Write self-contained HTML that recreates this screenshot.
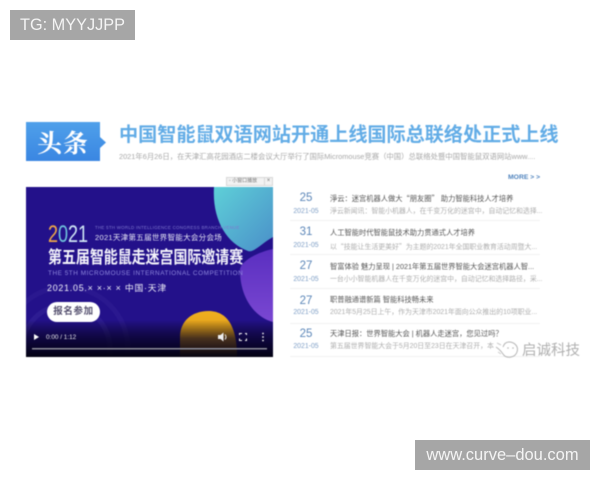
<!DOCTYPE html>
<html lang="zh">
<head>
<meta charset="utf-8">
<title>中国智能鼠双语网站</title>
<style>
html,body{margin:0;padding:0;background:#fff}
body{width:600px;height:480px;position:relative;overflow:hidden;font-family:"Liberation Sans","Noto Sans CJK SC",sans-serif}
.a{position:absolute;white-space:nowrap}
#c{position:absolute;left:0;top:0;width:600px;height:480px;filter:blur(.45px)}
.d{position:absolute;left:286px;width:40px;text-align:center;color:#5b86b8;line-height:1}
.n{font-size:11.5px}
.y{font-size:6.9px;color:#7f9fc6}
.t{position:absolute;left:330px;font-size:7.25px;color:#555;white-space:nowrap;line-height:1}
.s{position:absolute;left:330px;font-size:6.9px;color:#adadad;white-space:nowrap;line-height:1}
.l{position:absolute;left:290px;width:250px;height:1px;background:#f1f1f1}
.q{font-family:"Noto Sans CJK SC",sans-serif}
</style>
</head>
<body>
<div id="c">
  <svg class="a" style="left:26px;top:122px" width="82" height="40" viewBox="0 0 82 40">
    <defs><linearGradient id="g" x1="0" y1="0" x2="0" y2="1"><stop offset="0" stop-color="#4fa0ea"/><stop offset="1" stop-color="#3a86e2"/></linearGradient></defs>
    <path d="M0 0H74V15L80 20.5L74 26V39H0Z" fill="url(#g)"/>
  </svg>
  <div class="a" style="left:37px;top:126px;font:bold 25px/32px 'Noto Serif CJK SC',serif;color:#fff;letter-spacing:1px">头条</div>
  <div class="a" style="left:119px;top:123px;font-size:19.13px;font-weight:bold;line-height:26px;color:#62ace6">中国智能鼠双语网站开通上线国际总联络处正式上线</div>
  <div class="a" style="left:119px;top:152px;font-size:7.36px;line-height:10px;color:#a8a8a8">2021年6月26日，在天津汇高花园酒店二楼会议大厅举行了国际Micromouse竞赛（中国）总联络处暨中国智能鼠双语网站www....</div>

  <div class="a" style="left:508px;top:174px;font-size:6.8px;line-height:8px;font-weight:bold;color:#4f83bd">MORE &gt; &gt;</div>

  <div class="a" style="left:226px;top:177px;width:47px;height:9px;background:#f2f2f2;border:1px solid #d8d8d8;box-sizing:border-box;font-size:5px;line-height:7px;color:#777;padding-left:2px">▫ 小窗口播放</div>
  <div class="a" style="left:264px;top:177px;width:9px;height:9px;border:1px solid #d8d8d8;box-sizing:border-box;font-size:6px;line-height:7px;color:#777;text-align:center;background:#f2f2f2">×</div>

  <svg class="a" style="left:26px;top:187px" width="247" height="170" viewBox="0 0 247 170">
    <defs>
      <linearGradient id="b" x1="0" y1="0" x2="1" y2="1"><stop offset="0" stop-color="#5ed0d8"/><stop offset="1" stop-color="#4a8fc9"/></linearGradient>
      <linearGradient id="p" x1="0" y1="0" x2="0" y2="1"><stop offset="0" stop-color="#5a2fc0"/><stop offset="1" stop-color="#7a47d2"/></linearGradient>
      <linearGradient id="o" x1="0" y1="0" x2="0" y2="1"><stop offset="0" stop-color="#efb01f"/><stop offset="1" stop-color="#d98f1c"/></linearGradient>
      <linearGradient id="s" x1="0" y1="0" x2="0" y2="1"><stop offset="0" stop-color="#000" stop-opacity="0"/><stop offset=".5" stop-color="#05021e" stop-opacity=".7"/><stop offset="1" stop-color="#02010f" stop-opacity=".98"/></linearGradient>
    </defs>
    <rect width="247" height="170" fill="#23118a"/>
    <path d="M247 62V135C228 130 214 110 214 83C214 76 228 66 247 62Z" fill="url(#p)"/>
    <path d="M188 0H247V50C236 56 228 66 222 64C200 56 186 32 188 0Z" fill="url(#b)"/>
    <circle cx="40" cy="162" r="44" fill="none" stroke="#3a2a9c" stroke-width="5" opacity=".45"/>
    <circle cx="40" cy="162" r="62" fill="none" stroke="#3a2a9c" stroke-width="5" opacity=".3"/>
    <path d="M154 170V150C154 134 166 124 182.500 124C199 124 211 136 211 170Z" fill="url(#o)"/>
    <rect y="133" width="247" height="37" fill="url(#s)"/>
    <path d="M8 147V153L13 150Z" fill="#fff"/>
    <path d="M192 148H194.500L197.500 145.500V154.500L194.500 152H192Z" fill="#eee"/>
    <path d="M199 147.500Q201 150 199 152.500" fill="none" stroke="#eee" stroke-width="1"/>
    <path d="M213.500 148V146.500H216M219 146.500H220.500V148M220.500 151.500V153.500H219M216 153.500H213.500V151.500" fill="none" stroke="#eee" stroke-width="1"/>
    <circle cx="237" cy="146.500" r=".9" fill="#eee"/><circle cx="237" cy="150" r=".9" fill="#eee"/><circle cx="237" cy="153.500" r=".9" fill="#eee"/>
    <rect x="6" y="161" width="235" height="1.500" fill="#8f8f9c"/>
  </svg>

  <div class="a" style="left:48px;top:220px;font-size:24px;line-height:30px;color:#cfe6f5;transform:scaleX(.75);transform-origin:left"><span style="color:#efa948">2</span><span style="color:#6fc4dc">0</span><span>21</span></div>
  <div class="a" style="left:95px;top:225px;font-size:4.4px;line-height:6px;color:#7f78cf;letter-spacing:.28px">THE 5TH WORLD INTELLIGENCE CONGRESS BRANCH VENUE</div>
  <div class="a" style="left:95px;top:232px;font-size:7.5px;line-height:12px;color:#e6e6f5;letter-spacing:.3px">2021天津第五届世界智能大会分会场</div>
  <div class="a" style="left:48px;top:247px;font-size:17px;font-weight:bold;line-height:22px;color:#f4f4fb;transform:scaleX(.82);transform-origin:left">第五届智能鼠走迷宫国际邀请赛</div>
  <div class="a" style="left:48px;top:269px;font-size:6.4px;line-height:10px;color:#8d86dc;letter-spacing:.54px">THE 5TH MICROMOUSE INTERNATIONAL COMPETITION</div>
  <div class="a" style="left:47px;top:282px;font-size:8.8px;line-height:12px;color:#eeeef8;letter-spacing:.8px">2021.05.× ×·× × 中国·天津</div>
  <div class="a" style="left:47px;top:302px;width:53px;height:20px;border-radius:10px;background:#fff;color:#55506f;font-size:9.5px;font-weight:bold;line-height:20px;text-align:center;letter-spacing:.6px">报名参加</div>
  <div class="a" style="left:46px;top:332.500px;font-size:6.4px;line-height:9px;color:#e8e8ee">0:00 / 1:12</div>

  <div class="d n" style="top:193px">25</div><div class="d y" style="top:209px">2021-05</div>
  <div class="t" style="top:194.500px">淨云：迷宫机器人做大<span class="q">“</span>朋友圈<span class="q">”</span> 助力智能科技人才培养</div>
  <div class="s" style="top:208.500px">淨云新闻讯：智能小机器人，在千变万化的迷宫中，自动记忆和选择...</div>
  <div class="l" style="top:220px"></div>

  <div class="d n" style="top:227px">31</div><div class="d y" style="top:243px">2021-05</div>
  <div class="t" style="top:229px">人工智能时代智能鼠技术助力贯通式人才培养</div>
  <div class="s" style="top:242.500px">以<span class="q">“</span>技能让生活更美好<span class="q">”</span>为主题的2021年全国职业教育活动周暨大...</div>
  <div class="l" style="top:254px"></div>

  <div class="d n" style="top:261px">27</div><div class="d y" style="top:277px">2021-05</div>
  <div class="t" style="top:263px">智富体验 魅力呈现 | 2021年第五届世界智能大会迷宫机器人智...</div>
  <div class="s" style="top:276.500px">一台小小智能机器人在千变万化的迷宫中，自动记忆和选择路径，采...</div>
  <div class="l" style="top:288px"></div>

  <div class="d n" style="top:296px">27</div><div class="d y" style="top:310px">2021-05</div>
  <div class="t" style="top:296px">职普融通谱新篇 智能科技畅未来</div>
  <div class="s" style="top:309.500px">2021年5月25日上午，作为天津市2021年面向公众推出的10项职业...</div>
  <div class="l" style="top:323px"></div>

  <div class="d n" style="top:329px">25</div><div class="d y" style="top:344px">2021-05</div>
  <div class="t" style="top:330px">天津日报：世界智能大会 | 机器人走迷宫，您见过吗？</div>
  <div class="s" style="top:343.500px">第五届世界智能大会于5月20日至23日在天津召开，本</div>
  <div class="l" style="top:356px"></div>

  <svg class="a" style="left:495px;top:339px" width="26" height="22" viewBox="0 0 26 22">
    <path d="M1 8C4 10 6 12 8 15C11 20 20 19 22 13C24 7 19 3 14 3C11 3 9 5 8 8" fill="none" stroke="#b5b5b5" stroke-width="1"/>
    <path d="M2 4L6 6M3 13L6 15" stroke="#ccc" stroke-width="1" fill="none"/>
    <circle cx="13" cy="9" r=".8" fill="#b5b5b5"/><circle cx="18" cy="9" r=".8" fill="#b5b5b5"/>
  </svg>
  <div class="a" style="left:522px;top:342px;font-size:14.5px;line-height:18px;color:#b0b0b0">启诚科技</div>
</div>

<div class="a" style="left:10px;top:10px;width:125px;height:30px;background:#a6a6a6;color:#f4f4f4;font-size:16.3px;line-height:30px;text-indent:10px">TG: MYYJJPP</div>
<div class="a" style="left:415px;top:440px;width:175px;height:30px;background:#a6a6a6;color:#f4f4f4;font-size:16.5px;line-height:30px;text-align:center">www.curve–dou.com</div>
</body>
</html>
